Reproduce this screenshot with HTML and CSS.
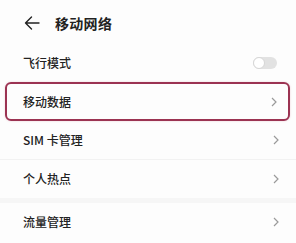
FILE: index.html
```html
<!DOCTYPE html>
<html lang="zh-CN">
<head>
<meta charset="utf-8">
<link rel="stylesheet" href="styles.css">
</head>
<body>
<div class="screen">
  <header class="topbar">
    <svg class="back" width="16" height="14" viewBox="0 0 16 14"><path d="M15 7H1.5M7.5 1L1.5 7l6 6" fill="none" stroke="#222" stroke-width="1.4" stroke-linecap="round" stroke-linejoin="round"/></svg>
    <h1 class="title">移动网络</h1>
  </header>
  <div class="list">
    <div class="row">
      <span class="label">飞行模式</span>
      <span class="toggle"><span class="knob"></span></span>
    </div>
    <div class="row row-hl">
      <span class="label">移动数据</span>
      <svg class="chev" width="6" height="10" viewBox="0 0 6 10"><path d="M1 1l4 4-4 4" fill="none" stroke="#9a9a9a" stroke-width="1.2"/></svg>
    </div>
    <div class="row row-line">
      <span class="label">SIM 卡管理</span>
      <svg class="chev" width="6" height="10" viewBox="0 0 6 10"><path d="M1 1l4 4-4 4" fill="none" stroke="#9a9a9a" stroke-width="1.2"/></svg>
    </div>
    <div class="row">
      <span class="label">个人热点</span>
      <svg class="chev" width="6" height="10" viewBox="0 0 6 10"><path d="M1 1l4 4-4 4" fill="none" stroke="#9a9a9a" stroke-width="1.2"/></svg>
    </div>
    <div class="gap"></div>
    <div class="row">
      <span class="label">流量管理</span>
      <svg class="chev" width="6" height="10" viewBox="0 0 6 10"><path d="M1 1l4 4-4 4" fill="none" stroke="#9a9a9a" stroke-width="1.2"/></svg>
    </div>
  </div>
</div>
</body>
</html>
```

FILE: styles.css
```css
html, body {
  margin: 0;
  padding: 0;
  background: #fdfdfd;
}
body {
  font-family: "Noto Sans CJK SC", "Noto Sans", sans-serif;
  color: #222;
}
.screen {
  width: 296px;
  height: 243px;
  overflow: hidden;
}
.topbar {
  height: 44px;
  display: flex;
  align-items: center;
  padding: 2px 0 0 24px;
  box-sizing: border-box;
}
.back {
  display: block;
}
.title {
  margin: 0 0 0 15px;
  font-size: 14px;
  font-weight: 700;
  line-height: 1;
  letter-spacing: 0.3px;
}
.list {
  display: flex;
  flex-direction: column;
}
.row {
  height: 38px;
  display: flex;
  align-items: center;
  justify-content: space-between;
  padding: 0 17px 0 23px;
  box-sizing: border-box;
}
.row-hl {
  height: 39px;
  margin: 0 6px 0 5px;
  padding: 0 11px 0 16px;
  border: 2px solid #9b3352;
  border-radius: 6px;
  box-shadow: 0 0 2px rgba(200, 80, 110, 0.3);
}
.row-line {
  height: 39px;
  border-bottom: 1px solid #f2f2f2;
}
.label {
  font-size: 12px;
  font-weight: 500;
  line-height: 1;
}
.chev {
  display: block;
}
.gap {
  height: 5px;
  background: #f6f6f6;
}
.toggle {
  width: 24px;
  height: 12px;
  border-radius: 6px;
  background: #e2e2e2;
  position: relative;
  margin-right: 2px;
}
.knob {
  position: absolute;
  left: 0;
  top: 0;
  width: 12px;
  height: 12px;
  border-radius: 50%;
  background: #fff;
  box-sizing: border-box;
  border: 1px solid #d6d6d6;
}
```
